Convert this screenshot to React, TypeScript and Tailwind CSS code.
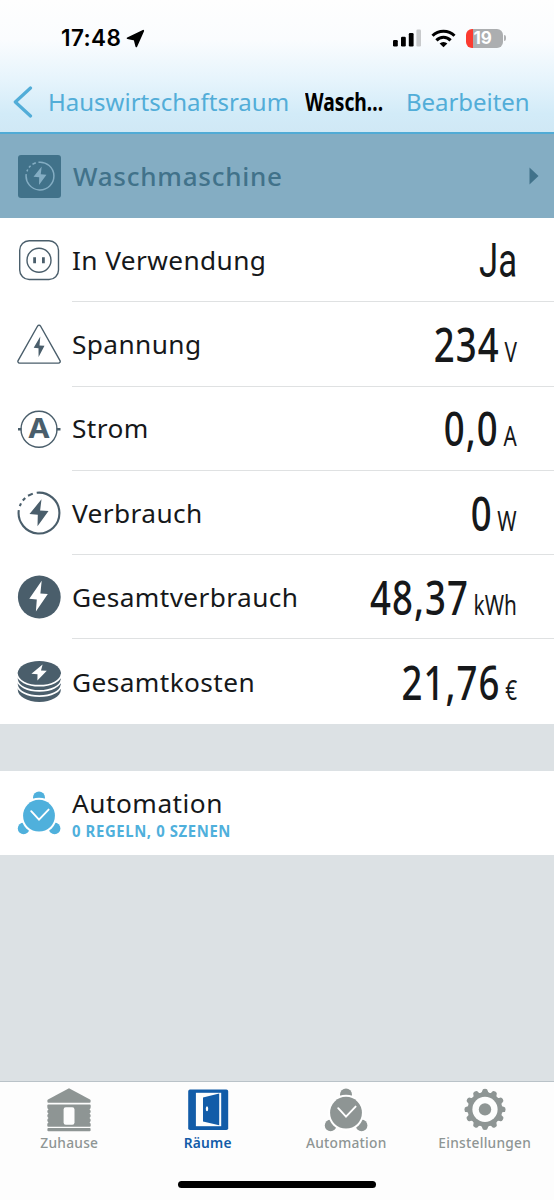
import React from 'react';

interface Reading {
    label: string;
    value: string;
    unit?: string;
    icon: React.ReactNode;
}

const SocketIcon = () => (
    <svg viewBox="0 0 44 44" className="size-11 shrink-0" fill="none" stroke="#4a5e6b" strokeWidth="1.4">
        <rect x="2.7" y="2.7" width="38.8" height="38.8" rx="9.5" />
        <circle cx="22" cy="22.2" r="12" />
        <path d="M17.6 19.3v6M26.4 19.3v6" strokeWidth="2.8" />
    </svg>
);

const VoltageIcon = () => (
    <svg viewBox="0 0 44 44" className="size-11 shrink-0">
        <path
            d="M20.6 4a1.7 1.7 0 0 1 2.9 0L43 38.6a1.7 1.7 0 0 1-1.5 2.5h-39A1.7 1.7 0 0 1 1.1 38.6Z"
            fill="none"
            stroke="#4a5e6b"
            strokeWidth="1.4"
        />
        <path d="M23.3 14.5 22.5 23.4 27.5 23.8 21.6 35 21.5 26.2 16.7 25.8Z" fill="#4a5e6b" />
    </svg>
);

const AmpereIcon = () => (
    <svg viewBox="0 0 44 44" className="size-11 shrink-0">
        <circle cx="22" cy="22.2" r="18" fill="none" stroke="#4a5e6b" strokeWidth="1.4" />
        <path d="M1 22.2h3.5M39.5 22.2H43.5" stroke="#4a5e6b" strokeWidth="2.4" />
        <text
            x="22"
            y="30.8"
            textAnchor="middle"
            textLength="22.5"
            lengthAdjust="spacingAndGlyphs"
            fill="#4a5e6b"
            className="font-['Inter',sans-serif] text-[27px] font-bold"
        >
            A
        </text>
    </svg>
);

const PowerIcon = ({ className = 'size-11 shrink-0 text-[#4a5e6b]', strokeWidth = 2.1 }) => (
    <svg viewBox="0 0 44 44" className={className} fill="none" stroke="currentColor" strokeWidth={strokeWidth}>
        <path d="M19.7 1.8A20.4 20.4 0 1 1 1.8 19.2" />
        <path d="M2.8 15.2 4 12.4M5.8 9.4 8.2 6.9M11 4.8 15.8 2.6" />
        <path d="M24.5 8.2 23.1 19.6 31.5 20.1 20.5 35.2 20.8 23.8 12.5 23.1Z" fill="currentColor" stroke="none" />
    </svg>
);

const EnergyIcon = () => (
    <svg viewBox="0 0 44 44" className="size-11 shrink-0">
        <circle cx="22.3" cy="22" r="21.4" fill="#4a5e6b" />
        <path d="M24.7 5.7 23.4 18.6 30.8 19 18.9 36.6 19.8 24.4 12.3 23.8Z" fill="#fff" />
    </svg>
);

// stacked discs, each one outlined in white against the disc below
const CoinsIcon = () => (
    <svg viewBox="0 0 44 44" className="size-11 shrink-0">
        <path d="M.8 13.3V31C.8 37.4 10.3 42.9 22.3 42.9S43.8 37.4 43.8 31V13.3Z" fill="#4a5e6b" />
        <ellipse cx="22.3" cy="14" rx="21.5" ry="11.9" fill="#4a5e6b" />
        <g fill="none" stroke="#fff" strokeWidth="1.7">
            <path d="M0 15.2C.6 21.8 10.4 26.7 22.3 26.7S44 21.8 44.6 15.2" />
            <path d="M0 20.6C1.2 27.2 10.4 31.9 22.3 31.9S43.4 27.2 44.6 20.6" />
            <path d="M0 26C1.2 32.6 10.4 37.2 22.3 37.2S43.4 32.6 44.6 26" />
        </g>
        <path d="M25.6 5.6 24 11.4 29.8 11.7 20.4 21.4 20.5 15.2 14.4 14.8Z" fill="#fff" />
    </svg>
);

const AlarmIcon = () => (
    <svg viewBox="0 0 44 44" className="size-11 shrink-0" fill="currentColor">
        <circle cx="22" cy="6.4" r="6" />
        <circle cx="6.6" cy="37.4" r="5.8" />
        <circle cx="37.6" cy="37.4" r="5.8" />
        <circle cx="22" cy="24.7" r="18" fill="#fff" />
        <circle cx="22" cy="24.7" r="15.9" />
        <path d="M14.2 20.2 22 28.6 31.6 18.6" fill="none" stroke="#fff" strokeWidth="1.9" strokeLinecap="round" />
    </svg>
);

const HouseIcon = () => (
    <svg viewBox="0 0 44 44" className="size-11" fill="currentColor">
        <path d="M22 .3 43 11.5q.6.4.6 1v1.2q0 1-1 1H1.4q-1 0-1-1v-1.2q0-.6.6-1Z" />
        <path d="M1.3 16.4H42.7q1 0 1 1v1.6q0 1.6-1.2 2.4 1.2.7 1.2 2t-1.2 2.2q1.2.7 1.2 2.2t-1.2 2.2q1.2.7 1.2 2.2t-1.2 2q1.2.8 1.2 2v1.6q0 1-1 1H1.3q-1 0-1-1v-1.6q0-1.2 1.2-2Q.3 33.5.3 32.2T1.5 30Q.3 29.3.3 27.8T1.5 25.6Q.3 24.9.3 23.4T1.5 21.4Q.3 20.6.3 19v-1.6q0-1 1-1Z" />
        <rect x=".4" y="40" width="43.2" height="3.2" rx="1" />
        <rect x="16.6" y="19.2" width="10.9" height="17.6" rx="2.2" fill="#fdfdfd" />
    </svg>
);

const DoorIcon = () => (
    <svg viewBox="0 0 44 44" className="size-11">
        <rect x="2.2" y="1.6" width="40" height="40.4" rx="1.8" fill="#125ca8" />
        <rect x="9.9" y="4.8" width="25.3" height="33.4" fill="#fdfdfd" />
        <path d="M17 9.4 33.2 5.6V37.2L17 33.6Z" fill="#125ca8" />
        <ellipse cx="21" cy="20.8" rx="1.2" ry="2.5" fill="#fdfdfd" />
    </svg>
);

const GEAR_TEETH = [0, 30, 60, 90, 120, 150, 180, 210, 240, 270, 300, 330];

const GearIcon = () => (
    <svg viewBox="0 0 44 44" className="size-11" fill="currentColor">
        <circle cx="22" cy="21.4" r="17.2" />
        {GEAR_TEETH.map((angle) => (
            <path
                key={angle}
                d="M17.3 5.4Q19.2 4.6 19.3 2.8A2.7 2 0 0 1 24.7 2.8Q24.8 4.6 26.7 5.4Z"
                transform={`rotate(${angle} 22 21.4)`}
            />
        ))}
        <circle cx="22" cy="21.4" r="12.6" fill="#fdfdfd" />
        <circle cx="22" cy="21.4" r="6.2" />
    </svg>
);

const readings: Reading[] = [
    { label: 'In Verwendung', value: 'Ja', icon: <SocketIcon /> },
    { label: 'Spannung', value: '234', unit: 'V', icon: <VoltageIcon /> },
    { label: 'Strom', value: '0,0', unit: 'A', icon: <AmpereIcon /> },
    { label: 'Verbrauch', value: '0', unit: 'W', icon: <PowerIcon /> },
    { label: 'Gesamtverbrauch', value: '48,37', unit: 'kWh', icon: <EnergyIcon /> },
    { label: 'Gesamtkosten', value: '21,76', unit: '€', icon: <CoinsIcon /> },
];

const tabs = [
    { label: 'Zuhause', icon: <HouseIcon />, active: false },
    { label: 'Räume', icon: <DoorIcon />, active: true },
    { label: 'Automation', icon: <AlarmIcon />, active: false },
    { label: 'Einstellungen', icon: <GearIcon />, active: false },
];

const StatusBar = () => (
    <div className="flex h-[76px] items-center pl-[61px] pr-12">
        <span className="w-[60px] font-['Inter',sans-serif] text-[22.5px] font-semibold tracking-[0.4px] text-black">17:48</span>
        <svg viewBox="0 0 19 19" className="ml-[5px] size-[19px]">
            <path
                d="M1.6 9.2 17.2 1.8 10.3 17.4 8.6 10.5Z"
                stroke="#000"
                strokeWidth="1.8"
                strokeLinejoin="round"
            />
        </svg>
        <div className="ml-auto flex items-center">
            <svg viewBox="0 0 28 18" className="h-[18px] w-7">
                <rect y="11" width="4.8" height="6.5" rx="1.2" />
                <rect x="8" y="7.8" width="4.8" height="9.7" rx="1.2" />
                <rect x="15.8" y="4" width="4.8" height="13.5" rx="1.2" />
                <rect x="23.4" y=".6" width="4.6" height="16.9" rx="1.2" fill="#c8cacc" />
            </svg>
            <svg viewBox="0 0 26 19" className="ml-2.5 h-[19px] w-[26px]" fill="none" stroke="#000" strokeWidth="3">
                <path d="M1.5 6.8A15.5 15.5 0 0 1 23.5 6.8" />
                <path d="M5.4 11.4A9.8 9.8 0 0 1 19.6 11.4" />
                <path d="M12.5 18.2 8.6 14.6A5.4 5.4 0 0 1 16.4 14.6Z" fill="#000" stroke="none" />
            </svg>
            <div className="ml-[9px] flex h-[19px] w-[37px] items-center overflow-hidden rounded-[6px] bg-[linear-gradient(90deg,#fb3b30_7px,#acaeb0_7px)] pl-[8px]">
                <span className="font-['Inter',sans-serif] text-[17px] font-bold leading-none text-white">19</span>
            </div>
            <div className="ml-px h-[6px] w-[2.5px] rounded-r-full bg-[#b0b2b4]" />
        </div>
    </div>
);

const NavBar = () => (
    <div className="flex h-[58px] items-center border-b-2 border-[#50abd6] pb-1 whitespace-nowrap text-[#52add8]">
        <svg
            viewBox="0 0 20 32"
            className="ml-[13px] h-8 w-5"
            fill="none"
            stroke="currentColor"
            strokeWidth="3.2"
            strokeLinecap="round"
            strokeLinejoin="round"
        >
            <path d="M17.5 2 2.3 16 17.5 30" />
        </svg>
        <span className="ml-[15px] w-[257px] text-[24px]">Hauswirtschaftsraum</span>
        <span className="w-[101px]">
            <span className="inline-block origin-left scale-x-[0.77] text-[25px] font-bold text-black">Wasch...</span>
        </span>
        <span className="text-[24px] tracking-[-0.05px]">Bearbeiten</span>
    </div>
);

export default function App() {
    return (
        <div className="flex h-[1200px] w-[554px] flex-col overflow-hidden bg-[#dce1e4] font-['Noto_Sans',sans-serif] text-[#16181a]">
            <header className="bg-[linear-gradient(180deg,#fefefe_0%,#fafcfe_30%,#e6f4fc_60%,#d2ebf8_85%,#d0e8f5_100%)]">
                <StatusBar />
                <NavBar />
            </header>

            <div className="flex h-[84px] items-center bg-[#84adc3] pl-[18px] pr-[15px] text-[#41728a]">
                <div className="flex size-[43px] items-center justify-center rounded-[3px] bg-[#41728a]">
                    <PowerIcon className="size-[30px] text-[#84adc3]" strokeWidth={2.2} />
                </div>
                <span className="ml-3 text-[26px] font-medium tracking-[0.75px]">Waschmaschine</span>
                <svg viewBox="0 0 10 18" className="ml-auto h-[18px] w-[10px]" fill="currentColor">
                    <path d="M.5.5 9.5 9 .5 17.5Z" />
                </svg>
            </div>

            <section className="bg-white">
                {readings.map((r, i) => (
                    <div key={r.label} className="flex h-[84.25px] pl-[17px]">
                        <div className="flex items-center">{r.icon}</div>
                        <div
                            className={`ml-[11px] flex flex-1 items-center justify-between pr-[37px] pt-0.5 whitespace-nowrap ${
                                i < readings.length - 1 ? 'border-b-[1.5px] border-[#dfe1e2]' : ''
                            }`}
                        >
                            <span className="text-[26.25px] tracking-[0.4px]">{r.label}</span>
                            {r.unit ? (
                                <span className="flex origin-right scale-x-[0.77] items-baseline gap-[6px] pb-0.5">
                                    <span className="text-[47.5px] font-medium leading-none tracking-[1.4px]">{r.value}</span>
                                    <span className="text-[27px] leading-none">{r.unit}</span>
                                </span>
                            ) : (
                                <span className="origin-right scale-x-[0.73] pt-[3px] font-['Roboto',sans-serif] text-[47.5px] leading-none">
                                    {r.value}
                                </span>
                            )}
                        </div>
                    </div>
                ))}
            </section>

            <section className="mt-[47.5px] flex h-[84px] items-center bg-white pl-[17px]">
                <div className="text-[#4fb0dc]">
                    <AlarmIcon />
                </div>
                <div className="ml-[11px] flex flex-col pt-1.5 whitespace-nowrap">
                    <span className="text-[26.25px] leading-[30px] tracking-[0.5px]">Automation</span>
                    <span className="origin-left scale-x-[0.93] text-[16px] font-bold leading-[26px] tracking-[0.65px] text-[#4fb0dc]">
                        0 REGELN, 0 SZENEN
                    </span>
                </div>
            </section>

            <nav className="mt-auto h-[119px] border-t border-[#b9c2c8] bg-[#fdfdfd]">
                <div className="grid grid-cols-4 pt-1.5">
                    {tabs.map((tab) => (
                        <div
                            key={tab.label}
                            className={`flex flex-col items-center ${tab.active ? 'font-semibold text-[#125ca8]' : 'font-medium text-[#8e9594]'}`}
                        >
                            {tab.icon}
                            <span className="text-[13.75px] leading-[22px] tracking-[0.25px]">{tab.label}</span>
                        </div>
                    ))}
                </div>
                <div className="mx-auto mt-[27px] h-[7px] w-[198px] rounded-full bg-black" />
            </nav>
        </div>
    );
}
